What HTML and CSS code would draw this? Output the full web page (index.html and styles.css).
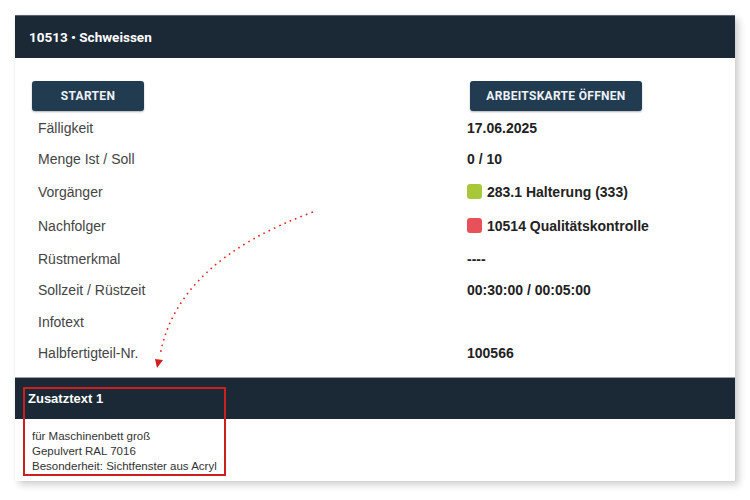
FILE: index.html
```html
<!DOCTYPE html>
<html lang="de">
<head>
<meta charset="utf-8">
<title>10513 • Schweissen</title>
<link rel="stylesheet" href="styles.css">
</head>
<body>
<div class="card">
  <div class="card-header">10513 • Schweissen</div>
  <div class="card-body">
    <div class="grid">
      <div class="cell-btn"><button class="btn btn-start">STARTEN</button></div>
      <div class="cell-btn"><button class="btn btn-open">ARBEITSKARTE ÖFFNEN</button></div>

      <div class="label">Fälligkeit</div><div class="value">17.06.2025</div>
      <div class="label">Menge Ist / Soll</div><div class="value">0 / 10</div>
      <div class="label tall">Vorgänger</div><div class="value tall"><span class="sq sq-green"></span>283.1 Halterung (333)</div>
      <div class="label tall">Nachfolger</div><div class="value tall"><span class="sq sq-red"></span>10514 Qualitätskontrolle</div>
      <div class="label">Rüstmerkmal</div><div class="value">----</div>
      <div class="label">Sollzeit / Rüstzeit</div><div class="value">00:30:00 / 00:05:00</div>
      <div class="label">Infotext</div><div class="value"></div>
      <div class="label">Halbfertigteil-Nr.</div><div class="value">100566</div>
    </div>
  </div>
  <div class="sub-header">Zusatztext 1</div>
  <div class="sub-body">
    <div>für Maschinenbett groß</div>
    <div>Gepulvert RAL 7016</div>
    <div>Besonderheit: Sichtfenster aus Acryl</div>
  </div>
  <div class="highlight"></div>
</div>
<svg class="arrow" width="750" height="500" viewBox="0 0 750 500">
  <path d="M313 212 Q176 262 160 356" fill="none" stroke="#e0241f" stroke-width="1.6" stroke-dasharray="1.6 4.2"/>
  <polygon points="155,359 163,360 157,368" fill="#d01f1c"/>
</svg>
</body>
</html>
```
FILE: styles.css
```css
html, body {
  margin: 0;
  padding: 0;
  background: #ffffff;
}
body {
  width: 750px;
  height: 500px;
  position: relative;
  font-family: "Liberation Sans", Arial, sans-serif;
  overflow: hidden;
}
.card {
  position: relative;
  margin: 15px 0 0 15px;
  width: 720px;
  background: #ffffff;
  box-shadow: 4px 4px 7px rgba(0, 0, 0, 0.18), 0 0 2px rgba(0, 0, 0, 0.08);
}
.card-header {
  height: 43px;
  box-sizing: border-box;
  border-top: 1px solid #5a6470;
  background: #1b2836;
  color: #ffffff;
  font-family: Roboto, "Liberation Sans", sans-serif;
  font-weight: 700;
  font-size: 13.5px;
  display: flex;
  align-items: center;
  padding-left: 14px;
}
.card-body {
  padding: 23px 0 8px 17px;
}
.grid {
  display: grid;
  grid-template-columns: 435px 1fr;
}
.cell-btn {
  height: 31px;
}
.cell-btn + .cell-btn {
  padding-left: 3px;
}
.btn {
  height: 30px;
  border: none;
  border-radius: 3px;
  background: #213b51;
  color: #eef2f5;
  font-family: Roboto, "Liberation Sans", sans-serif;
  font-weight: 700;
  font-size: 12px;
  letter-spacing: 0.3px;
  box-shadow: 0 1px 2px rgba(0, 0, 0, 0.3);
  padding: 0;
}
.btn-start {
  width: 112px;
}
.btn-open {
  width: 172px;
}
.label, .value {
  height: 31.5px;
  display: flex;
  align-items: center;
  font-size: 14px;
}
.label {
  padding-left: 6px;
  color: #444444;
}
.value {
  font-weight: 700;
  color: #222222;
}
.label.tall, .value.tall {
  height: 34px;
}
.sq {
  display: inline-block;
  width: 15px;
  height: 15px;
  border-radius: 3px;
  margin-right: 5px;
  position: relative;
  top: -1px;
}
.sq-green {
  background: #a8c83a;
}
.sq-red {
  background: #e8505a;
}
.sub-header {
  height: 42px;
  box-sizing: border-box;
  border-top: 1px solid #9aa0a6;
  background: #1b2836;
  color: #ffffff;
  font-weight: 700;
  font-size: 13px;
  display: flex;
  align-items: center;
  padding-left: 13px;
}
.sub-body {
  padding: 10px 0 7px 17px;
  font-size: 11.5px;
  line-height: 15px;
  color: #333333;
}
.highlight {
  position: absolute;
  left: 8px;
  top: 372px;
  width: 199px;
  height: 85px;
  border: 2px solid #cc1f1f;
}
.arrow {
  position: absolute;
  left: 0;
  top: 0;
  pointer-events: none;
}
```
